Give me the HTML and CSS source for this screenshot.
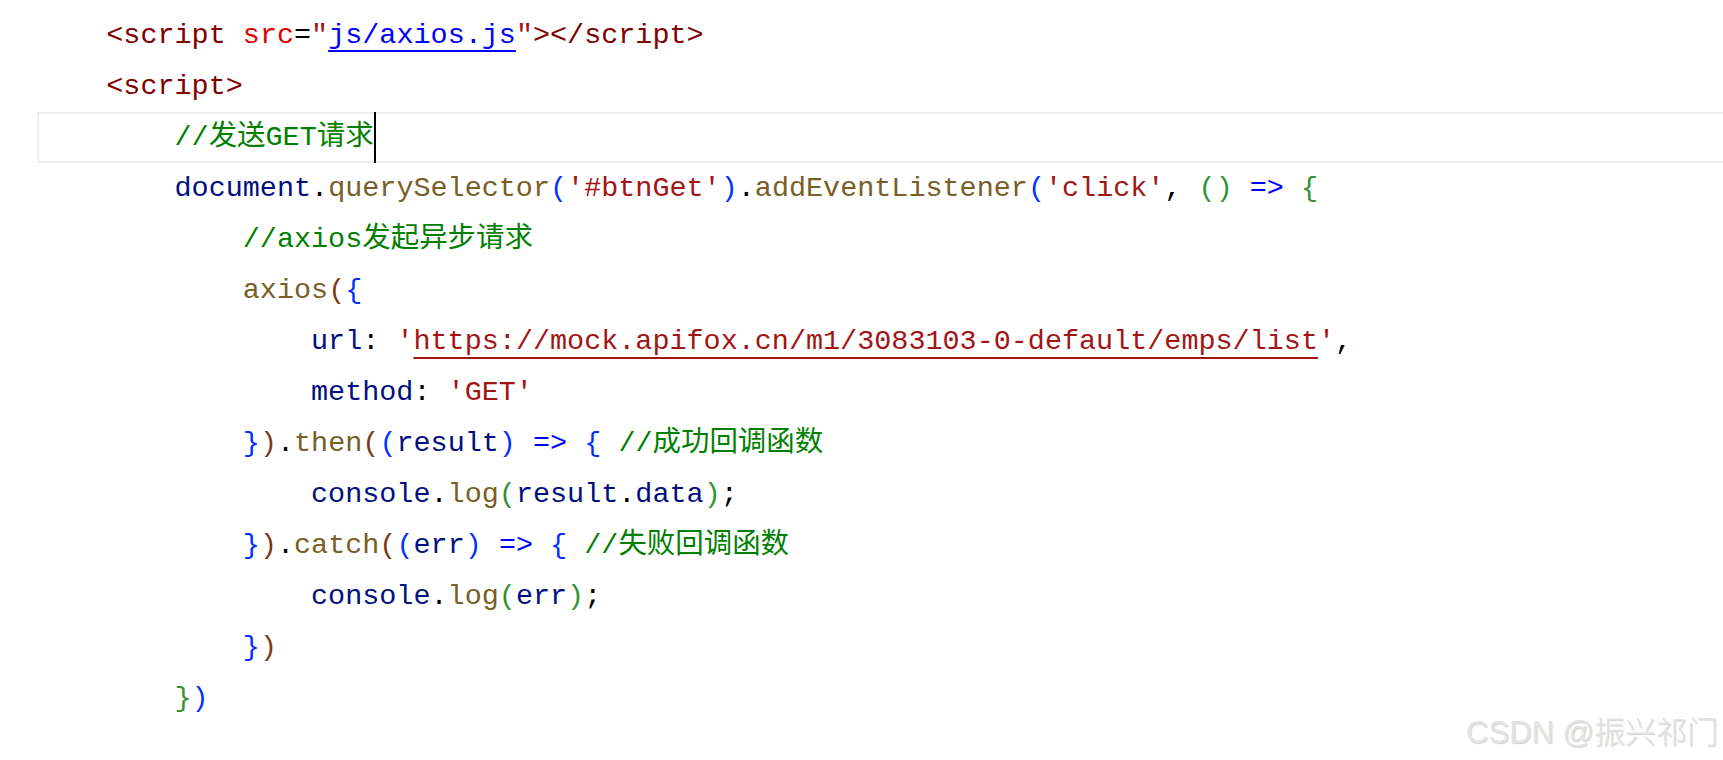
FILE: index.html
```html
<!DOCTYPE html>
<html lang="zh-CN">
<head>
<meta charset="utf-8">
<title>axios GET</title>
<link rel="stylesheet" href="styles.css">
</head>
<body>
<div class="editor">
<div class="line">    <span class="tg">&lt;script</span> <span class="at">src</span><span class="pn">=</span><span class="q">"</span><span class="lk">js/axios.js</span><span class="q">"</span><span class="tg">&gt;&lt;/script&gt;</span></div>
<div class="line">    <span class="tg">&lt;script&gt;</span></div>
<div class="line current">        <span class="cm">//发送GET请求</span><span class="cursor"></span></div>
<div class="line">        <span class="vr">document</span><span class="pn">.</span><span class="fn">querySelector</span><span class="b1">(</span><span class="st">'#btnGet'</span><span class="b1">)</span><span class="pn">.</span><span class="fn">addEventListener</span><span class="b1">(</span><span class="st">'click'</span><span class="pn">,</span> <span class="b2">()</span> <span class="kw">=&gt;</span> <span class="b2">{</span></div>
<div class="line">            <span class="cm">//axios发起异步请求</span></div>
<div class="line">            <span class="fn">axios</span><span class="b3">(</span><span class="b1">{</span></div>
<div class="line">                <span class="vr">url</span><span class="pn">:</span> <span class="st">'</span><span class="st ul">https://mock.apifox.cn/m1/3083103-0-default/emps/list</span><span class="st">'</span><span class="pn">,</span></div>
<div class="line">                <span class="vr">method</span><span class="pn">:</span> <span class="st">'GET'</span></div>
<div class="line">            <span class="b1">}</span><span class="b3">)</span><span class="pn">.</span><span class="fn">then</span><span class="b3">(</span><span class="b1">(</span><span class="vr">result</span><span class="b1">)</span> <span class="kw">=&gt;</span> <span class="b1">{</span> <span class="cm">//成功回调函数</span></div>
<div class="line">                <span class="vr">console</span><span class="pn">.</span><span class="fn">log</span><span class="b2">(</span><span class="vr">result</span><span class="pn">.</span><span class="vr">data</span><span class="b2">)</span><span class="pn">;</span></div>
<div class="line">            <span class="b1">}</span><span class="b3">)</span><span class="pn">.</span><span class="fn">catch</span><span class="b3">(</span><span class="b1">(</span><span class="vr">err</span><span class="b1">)</span> <span class="kw">=&gt;</span> <span class="b1">{</span> <span class="cm">//失败回调函数</span></div>
<div class="line">                <span class="vr">console</span><span class="pn">.</span><span class="fn">log</span><span class="b2">(</span><span class="vr">err</span><span class="b2">)</span><span class="pn">;</span></div>
<div class="line">            <span class="b1">}</span><span class="b3">)</span></div>
<div class="line">        <span class="b2">}</span><span class="b1">)</span></div>
</div>
<div class="watermark">CSDN @振兴祁门</div>
</body>
</html>
```
FILE: styles.css
```css
html, body {
  margin: 0;
  padding: 0;
  background: #ffffff;
  overflow: hidden;
}

body {
  width: 1723px;
  height: 760px;
  position: relative;
}

.editor {
  padding: 10px 0 0 38px;
  font-family: "Liberation Mono", "Noto Sans CJK SC", monospace;
  font-size: 28.45px;
  color: #000000;
}

.line {
  height: 51px;
  line-height: 51px;
  white-space: pre;
}

.line.current {
  margin-left: -1px;
  padding-left: 1px;
  box-shadow: inset 2px 0 0 #eeeeee, inset 0 2px 0 #eeeeee, inset 0 -2px 0 #eeeeee;
}

.cursor {
  display: inline-block;
  width: 0;
  height: 51px;
  border-left: 2px solid #000000;
  vertical-align: top;
}

.tg { color: #800000; }
.at { color: #e50000; }
.q { color: #a31515; }
.pn { color: #000000; }
.lk {
  color: #0000ff;
  text-decoration: underline;
  text-decoration-color: #0000ff;
  text-decoration-thickness: 2px;
  text-underline-offset: 7px;
}
.cm { color: #008000; }
.vr { color: #001080; }
.fn { color: #795e26; }
.st { color: #a31515; }
.ul {
  text-decoration: underline;
  text-decoration-color: #a31515;
  text-decoration-thickness: 2px;
  text-underline-offset: 8px;
}
.kw { color: #0000ff; }
.b1 { color: #0431fa; }
.b2 { color: #319331; }
.b3 { color: #7b3814; }

.watermark {
  position: absolute;
  right: 5px;
  bottom: 12px;
  font-family: "Liberation Sans", "Noto Sans CJK SC", sans-serif;
  font-size: 31px;
  font-weight: 300;
  line-height: 1;
  color: #e4e4e4;
  text-shadow: 1px 1px 1px rgba(0, 0, 0, 0.18);
}
```
